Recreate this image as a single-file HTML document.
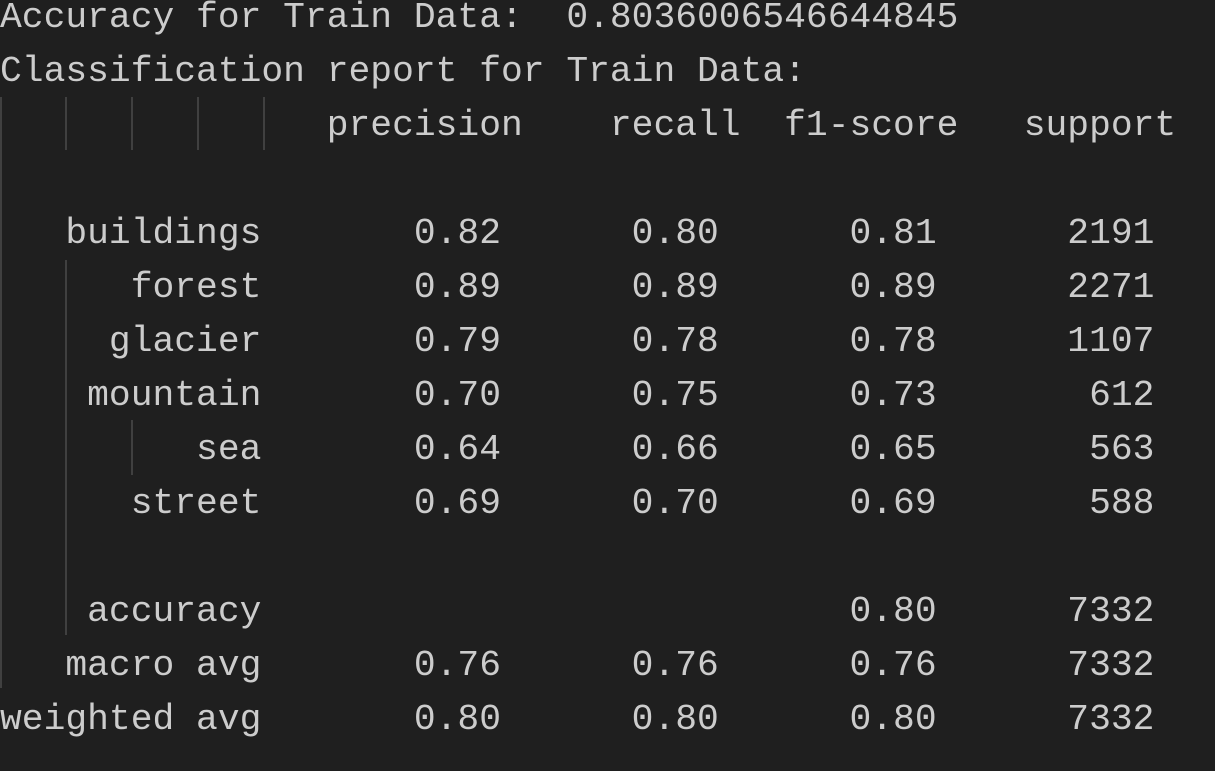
<!DOCTYPE html>
<html><head><meta charset="utf-8">
<style>
html,body{margin:0;padding:0;background:#1f1f1f;width:1215px;height:771px;overflow:hidden;}
pre{position:absolute;left:0;top:-9px;margin:0;font-family:"Liberation Mono",monospace;font-size:36.3px;line-height:54px;color:#cccccc;white-space:pre;}
.g{position:absolute;width:2px;background:#404040;}
</style></head><body>
<pre>Accuracy for Train Data:  0.8036006546644845
Classification report for Train Data:
               precision    recall  f1-score   support

   buildings       0.82      0.80      0.81      2191
      forest       0.89      0.89      0.89      2271
     glacier       0.79      0.78      0.78      1107
    mountain       0.70      0.75      0.73       612
         sea       0.64      0.66      0.65       563
      street       0.69      0.70      0.69       588

    accuracy                           0.80      7332
   macro avg       0.76      0.76      0.76      7332
weighted avg       0.80      0.80      0.80      7332</pre>
<div class="g" style="left:0;top:97px;height:591px"></div>
<div class="g" style="left:65px;top:97px;height:53px"></div>
<div class="g" style="left:131px;top:97px;height:53px"></div>
<div class="g" style="left:197px;top:97px;height:53px"></div>
<div class="g" style="left:263px;top:97px;height:53px"></div>
<div class="g" style="left:65px;top:260px;height:375px"></div>
<div class="g" style="left:131px;top:420px;height:55px"></div>
</body></html>
